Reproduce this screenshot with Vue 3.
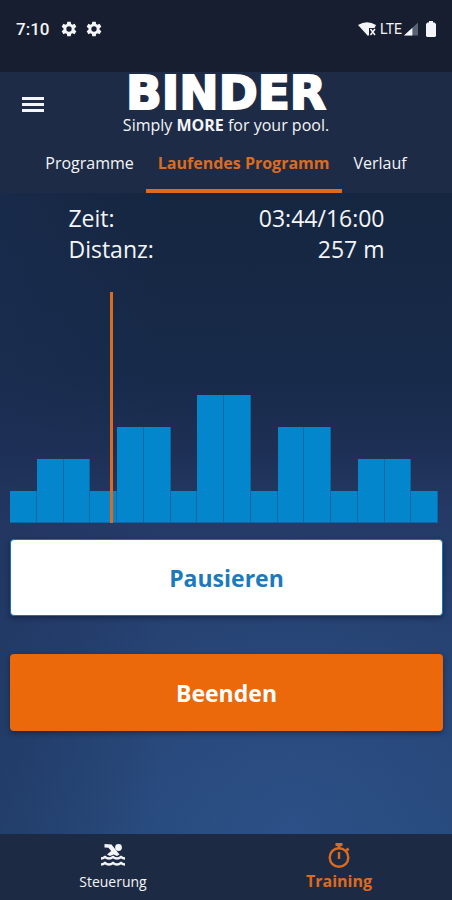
<script setup>
import { ref } from 'vue'

const levels = [1, 2, 2, 1, 3, 3, 1, 4, 4, 1, 3, 3, 1, 2, 2, 1]
const unit = 32
const elapsed = 3 * 60 + 44
const total = 16 * 60
const tabs = ['Programme', 'Laufendes Programm', 'Verlauf']
const activeTab = ref('Laufendes Programm')
</script>

<template>
  <div class="app">
    <div class="status">
      <span class="clock">7:10</span>
      <svg v-for="n in 2" :key="n" class="gear" viewBox="0 0 24 24" aria-hidden="true">
        <path fill="currentColor" fill-rule="evenodd" d="M9.4 1h5.2l.6 3.4 2 1.1 3.2-1.2 2.6 4.5-2.7 2.2v2l2.7 2.2-2.6 4.5-3.2-1.2-2 1.1-.6 3.4H9.4l-.6-3.4-2-1.1-3.2 1.2L1 15.200l2.700-2.200v-2L1 8.800l2.600-4.500 3.200 1.200 2-1.100zM12 8a4 4 0 1 0 0 8 4 4 0 0 0 0-8z" />
      </svg>
      <span class="spacer"></span>
      <svg class="wifi" viewBox="0 0 18 14" aria-hidden="true">
        <path fill="currentColor" d="M0 3Q9-2.500 18 3l-1.500 3H11V13l-1 1z" />
        <path fill="none" stroke="currentColor" stroke-width="1.500" d="M12.500 7l4.500 6M17 7l-4.500 6" />
      </svg>
      <span class="lte">LTE</span>
      <svg class="signal" viewBox="0 0 15 14" aria-hidden="true">
        <path fill="#596173" d="M15 0v14H0z" />
        <path fill="currentColor" d="M9 5.600V14H0z" />
      </svg>
      <svg class="battery" viewBox="0 0 10 16" aria-hidden="true">
        <path fill="currentColor" d="M3 0h4v1.500h1.500L10 3V15l-1 1H1l-1-1V3L1.500 1.500H3z" />
      </svg>
    </div>

    <header class="header">
      <div class="bar">
        <button class="menu" type="button" aria-label="Menü">
          <svg viewBox="0 0 22 15" aria-hidden="true">
            <path fill="currentColor" d="M0 0h22v3H0zM0 6h22v3H0zM0 12h22v3H0z" />
          </svg>
        </button>
        <div class="brand">
          <div class="name">BINDER</div>
          <div class="claim">Simply <b>MORE</b> for your pool.</div>
        </div>
      </div>
      <nav class="tabs">
        <button
          v-for="tab in tabs"
          :key="tab"
          type="button"
          class="tab"
          :class="{ active: tab === activeTab }"
          @click="activeTab = tab"
        >{{ tab }}</button>
      </nav>
    </header>

    <main class="main">
      <dl class="stats">
        <div class="stat"><dt>Zeit:</dt><dd>03:44/16:00</dd></div>
        <div class="stat"><dt>Distanz:</dt><dd>257 m</dd></div>
      </dl>
      <div class="chart">
        <div v-for="(level, i) in levels" :key="i" class="column" :style="{ height: level * unit + 'px' }"></div>
        <div class="marker" :style="{ left: (elapsed / total) * 100 + '%' }"></div>
      </div>
      <button class="action pause" type="button">Pausieren</button>
      <button class="action stop" type="button">Beenden</button>
    </main>

    <nav class="bottom">
      <a class="item" href="#steuerung">
        <svg class="icon" viewBox="0 0 24 22" aria-hidden="true">
          <circle cx="17.500" cy="3.500" r="3.400" fill="currentColor" />
          <path fill="currentColor" d="M3.500 0L10.500.5l8 10-2.500 1.500-3.500-1.500L9 12l-3-1.500L10.200 7 7.500 3.800 3.500 3.500z" />
          <path fill="none" stroke="currentColor" stroke-width="2.600" d="M0 14.500q2 0 4-1.500 2 1.500 4 1.500t4-1.500q2 1.500 4 1.500t4-1.500q2 1.500 4 1.500M0 20.500q2 0 4-1.500 2 1.500 4 1.500t4-1.500q2 1.500 4 1.500t4-1.500q2 1.500 4 1.500" />
        </svg>
        <span>Steuerung</span>
      </a>
      <a class="item current" href="#training">
        <svg class="icon timer" viewBox="0 0 22 25" aria-hidden="true">
          <circle cx="11" cy="14.500" r="9.300" fill="none" stroke="currentColor" stroke-width="2.400" />
          <path fill="currentColor" d="M7.500 0h7v3H12.500V5h-3V3h-2zM9.800 9h2.400v7H9.800zM17.500 6.500l2-2 2 2-2 2z" />
        </svg>
        <span>Training</span>
      </a>
    </nav>
  </div>
</template>

<style>
body {
  background: #1c2a44;
}
</style>

<style scoped>
.app {
  display: flex;
  flex-direction: column;
  min-height: 100vh;
  color: #f4f5f8;
  font-family: "Open Sans", "Noto Sans", sans-serif;
}
button {
  border: 0;
  font-family: inherit;
  cursor: pointer;
}
.status {
  display: flex;
  align-items: center;
  height: 58px;
  padding: 0 16px 14px;
  background: #161e30;
}
.clock {
  margin-right: 12px;
  font: 500 17px/20px Roboto, sans-serif;
}
.gear {
  width: 16px;
  height: 16px;
  margin-right: 9px;
}
.spacer {
  flex: 1;
}
.wifi {
  width: 18px;
  height: 14px;
}
.lte {
  margin: 0 2px 0 4px;
  font: 400 14px/20px Roboto, sans-serif;
}
.signal {
  width: 14px;
  height: 14px;
}
.battery {
  width: 10px;
  height: 16px;
  margin-left: 8px;
}
.header {
  background: #1d2b46;
}
.bar {
  display: grid;
  grid-template-columns: 1fr auto 1fr;
  align-items: center;
  height: 64px;
}
.menu {
  justify-self: start;
  padding: 8px 22px;
  background: none;
  color: inherit;
}
.menu svg {
  display: block;
  width: 22px;
  height: 15px;
}
.brand {
  text-align: center;
}
.name {
  color: #fff;
  font-family: "DejaVu Sans", sans-serif;
  font-size: 47px;
  font-weight: 700;
  line-height: 42px;
  -webkit-text-stroke: 2px #fff;
}
.claim {
  font-size: 16px;
  line-height: 22px;
}
.tabs {
  display: flex;
  justify-content: center;
}
.tab {
  padding: 16px 12px 15px;
  border-bottom: 4px solid transparent;
  background: none;
  color: inherit;
  font-size: 16px;
  line-height: 22px;
  white-space: nowrap;
}
.tab.active {
  border-color: #dc6b20;
  color: #dc6b20;
  font-weight: 700;
}
.main {
  flex: 1;
  padding: 10px 9px 0 10px;
  background:
    linear-gradient(90deg, rgba(30, 48, 88, 0.4), transparent 35%),
    radial-gradient(ellipse 60% 50% at 65% 100%, rgba(50, 88, 150, 0.5), transparent),
    linear-gradient(180deg, #152640 0%, #172a49 28%, #1d2f54 40%, #253a66 50%, #25406f 68%, #264878 100%);
}
.stats {
  width: 73%;
  margin: 0 auto;
  font-size: 23px;
  line-height: 31px;
}
.stat {
  display: flex;
  justify-content: space-between;
}
dd {
  margin: 0;
}
.chart {
  position: relative;
  display: flex;
  align-items: flex-end;
  height: 231px;
  margin: 27px 5px 0 0;
}
.column {
  box-sizing: border-box;
  flex: 1;
  border: solid #0869a6;
  border-width: 0 1px 1px 0;
  background: #0386cb;
}
.marker {
  position: absolute;
  top: 0;
  bottom: 0;
  width: 3px;
  background: #dc6b20;
}
.action {
  box-sizing: border-box;
  display: block;
  width: 100%;
  height: 77px;
  border-radius: 4px;
  box-shadow: 0 2px 5px rgba(8, 20, 45, 0.5);
  font-size: 23px;
  font-weight: 700;
}
.pause {
  margin-top: 16px;
  border: 1px solid #1674b8;
  background: #fff;
  color: #1a7abd;
}
.stop {
  margin: 38px 0;
  background: #eb690b;
  color: #fff;
}
.bottom {
  display: grid;
  grid-template-columns: 1fr 1fr;
  height: 66px;
  background: #1c2a44;
}
.item {
  display: flex;
  flex-direction: column;
  align-items: center;
  justify-content: center;
  color: inherit;
  font-size: 14px;
  line-height: 22px;
  text-decoration: none;
}
.icon {
  width: 24px;
  height: 22px;
  margin: 3px 0 5px;
}
.timer {
  width: 22px;
  height: 25px;
  margin: 1px 0 2px;
}
.current {
  color: #dc6b20;
  font-size: 16px;
  font-weight: 700;
}
</style>
